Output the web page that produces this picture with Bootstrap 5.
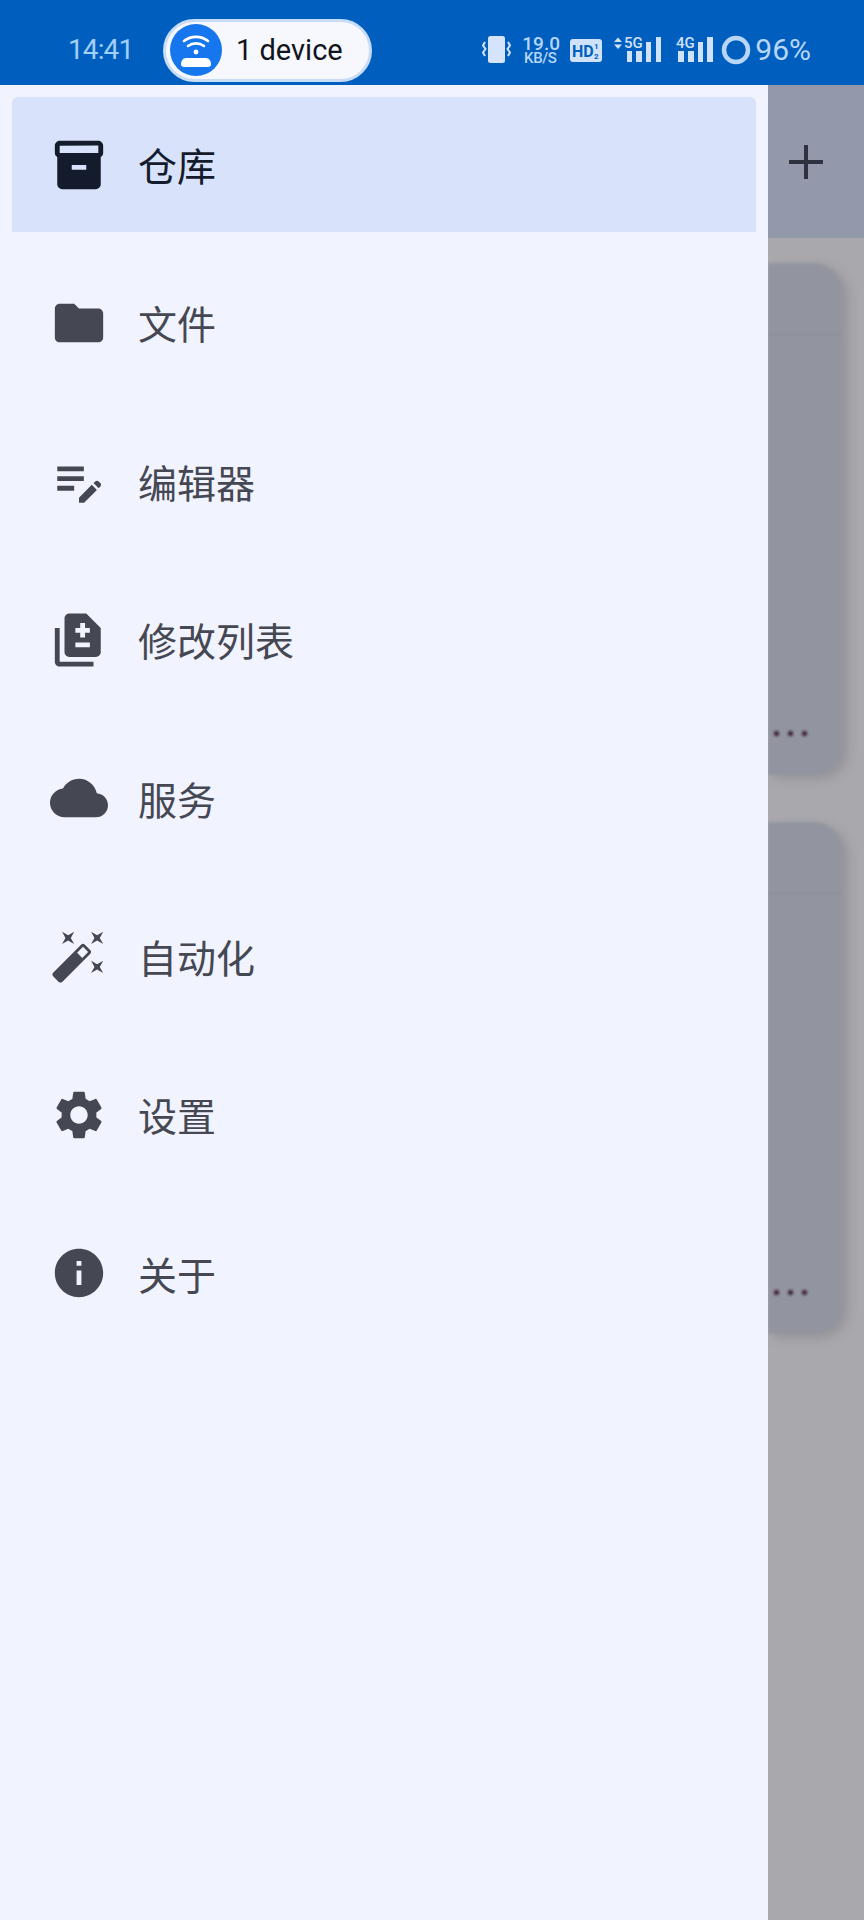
<!DOCTYPE html>
<html lang="zh-CN">
<head>
    <meta charset="UTF-8">
    <meta name="viewport" content="width=device-width, initial-scale=1.0">
    <title>仓库</title>
    <link rel="stylesheet" href="https://cdn.jsdelivr.net/npm/bootstrap@5.3.0/dist/css/bootstrap.min.css">
    <style>
        html, body { height: 1920px; overflow: hidden; }
        body { background: #a9a8ad; font-family: "Noto Sans CJK SC", "Liberation Sans", sans-serif; }

        /* status bar */
        .status-bar { height: 85px; padding: 15px 53px 0 68px; background: #005fbe; color: #b7d6f8; font-family: Roboto, "Liberation Sans", sans-serif; }
        .status-time { width: 63px; margin-right: 32px; font-size: 28px; letter-spacing: -.9px; color: #a3cef5; line-height: 1; }
        .device-pill { width: 209px; height: 63px; padding-left: 4px; gap: 14px; background: #f6f8fe; border: 3px solid #c9dcf7; border-radius: 32px; color: #10141c; font-size: 29px; line-height: 1; }
        .device-dot { width: 52px; height: 52px; background: #1576ee; }
        .net-speed { width: 36px; margin: 0 12px 0 10px; text-align: center; white-space: nowrap; }
        .net-speed b { display: block; font-size: 19px; line-height: 16px; font-weight: 500; }
        .net-speed i { display: block; font-size: 15px; line-height: 13px; letter-spacing: -.3px; font-style: normal; font-weight: 500; }
        .hd-badge { width: 32px; height: 23px; margin-right: 12px; }
        .sim-4g { margin: 0 8px 0 14px; }
        .battery-text { margin-left: 4px; font-size: 30px; line-height: 1; }

        /* drawer */
        .screen-body { height: 1835px; }
        .side-drawer { width: 768px; padding: 12px; background: #f1f3ff; }
        .drawer-list { gap: 23.4px; --bs-list-group-bg: transparent; --bs-list-group-border-width: 0; }
        .drawer-item { height: 135px; padding: 0 0 0 38px; gap: 30px; color: #454853; font-size: 39px; line-height: 1; border-radius: 0; }
        .drawer-item.active { background: #d8e2fb; color: #141b2c; }
        .drawer-item svg { width: 58px; height: 58px; flex: none; fill: currentColor; }

        /* page behind the scrim */
        .behind-pane { width: 96px; }
        .behind-header { height: 153px; padding-right: 41px; background: #9399aa; }
        .behind-card { height: 512px; margin: 25px 22px 0 0; background: #92959f; border: 0; border-radius: 0 28px 28px 0; box-shadow: 6px 4px 10px rgba(90, 88, 96, .25); filter: blur(1.5px); }
        .behind-card + .behind-card { margin-top: 47px; }
        .behind-rule { height: 72px; border-bottom: 1px solid #868993; }
        .behind-dots { gap: 9px; padding: 0 0 39px 6px; }
        .behind-dots span { width: 5px; height: 5px; background: #34102c; }
    </style>
</head>
<body>
    <div class="status-bar d-flex align-items-center">
        <span class="status-time">14:41</span>
        <div class="device-pill d-flex align-items-center">
            <span class="device-dot rounded-circle d-flex align-items-center justify-content-center flex-shrink-0">
                <svg width="52" height="52" viewBox="0 0 52 52">
                    <g fill="none" stroke="#fff" stroke-width="2.6" stroke-linecap="round">
                        <path d="M14 17c7-5.5 17-5.500 24 0"/>
                        <path d="M18 22c4.800-3.500 11.200-3.500 16 0"/>
                    </g>
                    <circle cx="26" cy="28" r="2.400" fill="#fff"/>
                    <path d="M16 34h20c3 0 5 3 5 6 0 2-1 3-3 3H14c-2 0-3-1-3-3 0-3 2-6 5-6z" fill="#fff"/>
                </svg>
            </span>
            <span>1 device</span>
        </div>
        <div class="d-flex align-items-center ms-auto">
            <svg width="30" height="30" viewBox="0 0 30 30">
                <rect x="6" y="1" width="17" height="27" rx="2.500" fill="#d5e4fa"/>
                <path d="M3 7 1 10.500l2.500 3.500L1 17.500 3 21M26 7l2 3.500-2.500 3.500 2.500 3.500-2 3.500" fill="none" stroke="#d5e4fa" stroke-width="2"/>
            </svg>
            <div class="net-speed"><b>19.0</b><i>KB/S</i></div>
            <svg class="hd-badge" viewBox="0 0 32 23">
                <rect width="32" height="23" rx="3" fill="#cfe2fa"/>
                <text x="2" y="17.500" font-family="Roboto, sans-serif" font-size="16" font-weight="700" fill="#005fbe">HD</text>
                <text x="24" y="9.500" font-family="Roboto, sans-serif" font-size="8" font-weight="700" fill="#005fbe">1</text>
                <text x="24" y="20" font-family="Roboto, sans-serif" font-size="8" font-weight="700" fill="#005fbe">2</text>
            </svg>
            <svg width="48" height="30" viewBox="0 0 48 30">
                <path d="M0 7l4-4.500L8 7zM0 9.500h8L4 14z" fill="#cfe2fa"/>
                <text x="10" y="13" font-family="Roboto, sans-serif" font-size="15" font-weight="500" fill="#cfe2fa">5G</text>
                <path d="M13 16h5v11h-5zM22 16h6v11h-6zM32 7h5v20h-5zM42 2h5v25h-5z" fill="#cfe2fa"/>
            </svg>
            <svg class="sim-4g" width="37" height="30" viewBox="0 0 37 30">
                <text x="0" y="13" font-family="Roboto, sans-serif" font-size="15" font-weight="500" fill="#cfe2fa">4G</text>
                <path d="M2 16h6v11H2zM12 16h6v11h-6zM22 7h5v20h-5zM31 2h6v25h-6z" fill="#cfe2fa"/>
            </svg>
            <svg width="30" height="30" viewBox="0 0 30 30">
                <circle cx="15" cy="15" r="12" fill="none" stroke="#b7d6f8" stroke-width="4.500"/>
            </svg>
            <span class="battery-text">96%</span>
        </div>
    </div>

    <div class="screen-body d-flex">
        <nav class="side-drawer flex-shrink-0">
            <div class="list-group drawer-list">
                <a class="list-group-item drawer-item active d-flex align-items-center">
                    <svg viewBox="0 0 24 24"><path d="M20 2H4c-1 0-2 .9-2 2v3.010c0 .72.43 1.340 1 1.690V20c0 1.100 1.100 2 2 2h14c.9 0 2-.9 2-2V8.700c.57-.35 1-.97 1-1.690V4c0-1.100-1-2-2-2zm-5 12H9v-2h6v2zm5-7H4V4l16-.02V7z"/></svg>
                    <span>仓库</span>
                </a>
                <a class="list-group-item drawer-item d-flex align-items-center">
                    <svg viewBox="0 0 24 24"><path d="M10 4H4c-1.100 0-1.990.9-1.990 2L2 18c0 1.100.9 2 2 2h16c1.100 0 2-.9 2-2V8c0-1.100-.9-2-2-2h-8l-2-2z"/></svg>
                    <span>文件</span>
                </a>
                <a class="list-group-item drawer-item d-flex align-items-center">
                    <svg viewBox="0 0 24 24"><path d="M3 10h11v2H3v-2zm0-2h11V6H3v2zm0 8h7v-2H3v2zm15.010-3.130.71-.71c.39-.39 1.020-.39 1.410 0l.71.71c.39.39.39 1.020 0 1.410l-.71.71-2.120-2.120zm-.71.71-5.300 5.300V21h2.120l5.300-5.300-2.120-2.120z"/></svg>
                    <span>编辑器</span>
                </a>
                <a class="list-group-item drawer-item d-flex align-items-center">
                    <svg viewBox="0 0 24 24"><path d="M18 23H4c-1.100 0-2-.9-2-2V7h2v14h14v2zM15 1H8c-1.100 0-1.990.9-1.990 2L6 17c0 1.100.89 2 1.990 2H19c1.100 0 2-.9 2-2V7l-6-6zm1.500 14h-6v-2h6v2zm0-6h-2v2h-2V9h-2V7h2V5h2v2h2v2z"/></svg>
                    <span>修改列表</span>
                </a>
                <a class="list-group-item drawer-item d-flex align-items-center">
                    <svg viewBox="0 0 24 24"><path d="M19.350 10.040C18.670 6.590 15.640 4 12 4 9.110 4 6.600 5.640 5.350 8.040 2.340 8.360 0 10.910 0 14c0 3.310 2.690 6 6 6h13c2.760 0 5-2.240 5-5 0-2.640-2.050-4.780-4.650-4.960z"/></svg>
                    <span>服务</span>
                </a>
                <a class="list-group-item drawer-item d-flex align-items-center">
                    <svg viewBox="0 0 24 24"><path d="M7.500 5.600 10 7 8.600 4.500 10 2 7.500 3.400 5 2l1.400 2.500L5 7zm12 9.800L17 14l1.400 2.500L17 19l2.500-1.400L22 19l-1.400-2.500L22 14zM22 2l-2.500 1.400L17 2l1.400 2.500L17 7l2.500-1.400L22 7l-1.400-2.500zm-7.630 5.290a.9959.9959 0 0 0-1.410 0L1.290 18.960c-.39.39-.39 1.020 0 1.410l2.340 2.340c.39.39 1.020.39 1.410 0L16.700 11.050c.39-.39.39-1.020 0-1.410l-2.330-2.350zm-1.030 5.490-2.120-2.120 2.440-2.440 2.120 2.120-2.440 2.440z"/></svg>
                    <span>自动化</span>
                </a>
                <a class="list-group-item drawer-item d-flex align-items-center">
                    <svg viewBox="0 0 24 24"><path d="M19.140 12.940c.04-.3.06-.61.06-.94 0-.32-.02-.64-.07-.94l2.030-1.580c.18-.14.23-.41.12-.61l-1.920-3.320c-.12-.22-.37-.29-.59-.22l-2.390.96c-.5-.38-1.030-.7-1.620-.94l-.36-2.540c-.04-.24-.24-.41-.48-.41h-3.840c-.24 0-.43.17-.47.41l-.36 2.540c-.59.24-1.130.57-1.620.94l-2.390-.96c-.22-.08-.47 0-.59.22L2.740 8.870c-.12.21-.08.47.12.61l2.030 1.580c-.05.3-.09.63-.09.94s.02.64.07.94l-2.030 1.580c-.18.14-.23.41-.12.61l1.920 3.320c.12.22.37.29.59.22l2.390-.96c.5.38 1.030.7 1.620.94l.36 2.540c.05.24.24.41.48.41h3.840c.24 0 .44-.17.47-.41l.36-2.540c.59-.24 1.130-.56 1.620-.94l2.390.96c.22.08.47 0 .59-.22l1.920-3.320c.12-.22.07-.47-.12-.61l-2.010-1.580zM12 15.600c-1.980 0-3.600-1.620-3.600-3.600s1.620-3.600 3.600-3.600 3.600 1.620 3.600 3.600-1.620 3.600-3.600 3.600z"/></svg>
                    <span>设置</span>
                </a>
                <a class="list-group-item drawer-item d-flex align-items-center">
                    <svg viewBox="0 0 24 24"><path d="M12 2C6.480 2 2 6.480 2 12s4.480 10 10 10 10-4.480 10-10S17.520 2 12 2zm1 15h-2v-6h2v6zm0-8h-2V7h2v2z"/></svg>
                    <span>关于</span>
                </a>
            </div>
        </nav>

        <div class="behind-pane flex-grow-1 overflow-hidden">
            <div class="behind-header d-flex align-items-center justify-content-end">
                <svg width="34" height="34" viewBox="0 0 34 34"><path d="M15 0h4v15h15v4H19v15h-4V19H0v-4h15z" fill="#2d3140"/></svg>
            </div>
            <div class="card behind-card">
                <div class="behind-rule"></div>
                <div class="behind-dots d-flex mt-auto">
                    <span class="rounded-circle"></span><span class="rounded-circle"></span><span class="rounded-circle"></span>
                </div>
            </div>
            <div class="card behind-card">
                <div class="behind-rule"></div>
                <div class="behind-dots d-flex mt-auto">
                    <span class="rounded-circle"></span><span class="rounded-circle"></span><span class="rounded-circle"></span>
                </div>
            </div>
        </div>
    </div>
</body>
</html>
